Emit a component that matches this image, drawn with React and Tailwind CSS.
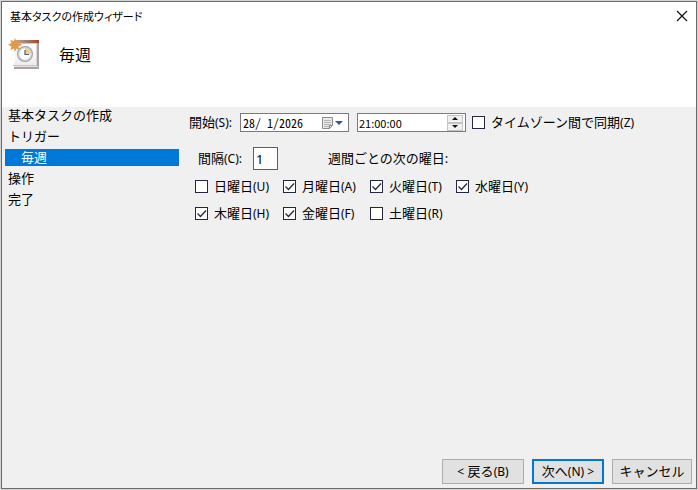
import { useState } from "react";

const steps = [
  { name: "基本タスクの作成" },
  { name: "トリガー" },
  { name: "毎週", child: true },
  { name: "操作" },
  { name: "完了" },
];

const initialDays = [
  { name: "日曜日", hotkey: "(U)", checked: false },
  { name: "月曜日", hotkey: "(A)", checked: true },
  { name: "火曜日", hotkey: "(T)", checked: true },
  { name: "水曜日", hotkey: "(Y)", checked: true },
  { name: "木曜日", hotkey: "(H)", checked: true },
  { name: "金曜日", hotkey: "(F)", checked: true },
  { name: "土曜日", hotkey: "(R)", checked: false },
];

const TaskIcon = () => (
  <svg width="33" height="33" viewBox="0 0 33 33" aria-hidden="true">
    <defs>
      <linearGradient id="band" x1="0" x2="1">
        <stop offset="0" stopColor="#b9aaa6" />
        <stop offset="1" stopColor="#9c4a24" />
      </linearGradient>
      <linearGradient id="page" x1="0" x2="0" y2="1">
        <stop offset="0" stopColor="#ffffff" />
        <stop offset="1" stopColor="#efecec" />
      </linearGradient>
    </defs>
    <path d="M6 28h22V3h3v28H6z" fill="#aaa3a3" />
    <path d="M28 6h1v22h-1z" fill="#dcd8d8" />
    <path d="M7 5h21v22H5l2-4z" fill="url(#page)" />
    <path d="M5 27h24v1H5z" fill="#c9c4c4" />
    <path d="M6 28h24v1H6z" fill="#e4e1e1" />
    <path d="M7 2h24v3H7z" fill="url(#band)" />
    <path d="M7 5h22v1H7z" fill="#dcc6bc" />
    <circle cx="17" cy="16" r="8" fill="#9b9fa2" />
    <circle cx="17" cy="16" r="7" fill="#cfd3d5" />
    <circle cx="17" cy="16" r="5.700" fill="#fafaf8" />
    <path d="M17 16v-5.700a5.700 5.700 0 0 1 5.700 5.700z" fill="#f2cd88" />
    <path d="M17 12v4.500h4" fill="none" stroke="#56606a" strokeWidth="1.200" />
    <path
      d="M7 0l1.300 3.300L11.500 1.500 10.500 5l4 1.800-4 1.800 1.300 3.400-3.500-1.500L7 14l-1.300-3.500L2.300 12l1.200-3.400L0 6.800 3.500 5 2.300 1.800l3.400 1.500z"
      fill="#e29a48"
    />
  </svg>
);

const CheckBox = ({ name, hotkey, checked, onChange }) => (
  <label className="flex items-center gap-1.5 whitespace-nowrap">
    <span className="relative flex">
      <input
        type="checkbox"
        checked={checked}
        onChange={onChange}
        className="peer size-[13px] appearance-none border border-[#26263e] bg-white"
      />
      <svg
        viewBox="0 0 13 13"
        className="pointer-events-none absolute inset-0 hidden size-[13px] peer-checked:block"
      >
        <path d="M2.500 6.500l3 3 5.500-6" fill="none" stroke="#26263e" strokeWidth="1.300" />
      </svg>
    </span>
    <span>
      {name}
      <span className="text-xs">{hotkey}</span>
    </span>
  </label>
);

const App = () => {
  const [date, setDate] = useState("28/ 1/2026");
  const [time, setTime] = useState("21:00:00");
  const [interval, setInterval] = useState("1");
  const [sync, setSync] = useState(false);
  const [days, setDays] = useState(initialDays);

  const toggleDay = (name) =>
    setDays(days.map((d) => (d.name === name ? { ...d, checked: !d.checked } : d)));

  return (
    <div className="flex min-h-screen bg-[#d4d4d4] p-px font-['Noto_Sans','Noto_Sans_CJK_JP',sans-serif] text-[13px] leading-[19px] text-black">
      <div className="flex flex-1 flex-col border border-[#6b6b6b] bg-[#f0f0f0]">
        <header className="h-[105px] bg-white">
          <div className="flex items-center justify-between pt-1 pr-1 pl-2">
            <h1 className="text-[11px] [font-feature-settings:'palt']">基本タスクの作成ウィザード</h1>
            <button type="button" aria-label="閉じる" className="p-1">
              <svg width="12" height="12" viewBox="0 0 12 12">
                <path d="M1 1l10 10M11 1L1 11" stroke="#111" strokeWidth="1.200" />
              </svg>
            </button>
          </div>
          <div className="flex items-center gap-[18px] pt-3 pl-1.5">
            <TaskIcon />
            <h2 className="text-base leading-5">毎週</h2>
          </div>
        </header>

        <div className="flex flex-1">
          <nav className="w-[177px] pl-[3px]">
            <ul>
              {steps.map((s) => (
                <li key={s.name} className="flex h-[21px] items-start">
                  <span
                    className={
                      s.child
                        ? "w-full bg-[#0078d7] pl-4 leading-[17px] text-white"
                        : "w-full pl-[3px] leading-[17px]"
                    }
                  >
                    {s.name}
                  </span>
                </li>
              ))}
            </ul>
          </nav>

          <main className="flex-1 pt-1.5 pl-2.5">
            <div className="flex h-[19px] items-center">
              <label htmlFor="start" className="w-[51px]">
                開始<span className="text-xs">(S):</span>
              </label>
              <div className="flex h-[19px] w-[109px] items-center border border-[#7a7a7a] bg-white">
                <input
                  id="start"
                  value={date}
                  onChange={(e) => setDate(e.target.value)}
                  className="w-0 flex-1 pl-0.5 font-['Noto_Sans_CJK_JP',sans-serif] text-xs leading-4 outline-none [font-feature-settings:'hwid']"
                />
                <button type="button" aria-label="カレンダー" className="pr-1">
                  <svg width="23" height="14" viewBox="0 0 23 14">
                    <path d="M1.500 1.500h10v8l-3 3h-7z" fill="#e9e9e9" stroke="#8b8b8b" />
                    <path
                      d="M3 4.500h7M3 6.500h7M3 8.500h7M3 10.500h5"
                      stroke="#b4b4b4"
                      strokeWidth="1"
                    />
                    <path d="M8.500 12.500v-3h3z" fill="#fff" stroke="#8b8b8b" />
                    <path d="M14 5h8l-4 4z" fill="#2f5c92" />
                  </svg>
                </button>
              </div>
              <div className="ml-2 flex h-[19px] w-[109px] items-center border border-[#7a7a7a] bg-white">
                <input
                  aria-label="開始時刻"
                  value={time}
                  onChange={(e) => setTime(e.target.value)}
                  className="w-0 flex-1 pl-px font-['Noto_Sans_CJK_JP',sans-serif] text-[11px] leading-4 outline-none"
                />
                <div className="flex flex-col pr-0.5">
                  <button
                    type="button"
                    aria-label="進める"
                    className="flex h-2 w-4 items-center justify-center border border-[#c4c4c4] bg-[#f0f0f0]"
                  >
                    <svg width="6" height="3" viewBox="0 0 6 3">
                      <path d="M0 3l3-3 3 3z" fill="#111" />
                    </svg>
                  </button>
                  <button
                    type="button"
                    aria-label="戻す"
                    className="flex h-2 w-4 items-center justify-center border border-[#c4c4c4] bg-[#f0f0f0]"
                  >
                    <svg width="6" height="3" viewBox="0 0 6 3">
                      <path d="M0 0h6L3 3z" fill="#111" />
                    </svg>
                  </button>
                </div>
              </div>
              <div className="ml-1.5">
                <CheckBox
                  name="タイムゾーン間で同期"
                  hotkey="(Z)"
                  checked={sync}
                  onChange={() => setSync(!sync)}
                />
              </div>
            </div>

            <div className="flex items-center pt-[15px] pl-[9px]">
              <label htmlFor="interval" className="w-[55px]">
                間隔<span className="text-xs">(C):</span>
              </label>
              <input
                id="interval"
                value={interval}
                onChange={(e) => setInterval(e.target.value)}
                className="h-[23px] w-[25px] border border-[#0078d7] bg-white pl-0.5 outline-none"
              />
              <span className="pl-[50px]">週間ごとの次の曜日:</span>
            </div>

            <div className="grid grid-cols-[88px_87px_86px_auto] gap-y-2 pt-[7px] pl-1.5">
              {days.map((d) => (
                <CheckBox key={d.name} {...d} onChange={() => toggleDay(d.name)} />
              ))}
            </div>
          </main>
        </div>

        <footer className="flex justify-end gap-2 pr-1 pb-1">
          <button type="button" className="h-[25px] w-[82px] border border-[#adadad] bg-[#e1e1e1]">
            <span className="text-xs">&lt;</span> 戻る<span className="text-xs">(B)</span>
          </button>
          <button type="button" className="h-[25px] w-[72px] border-2 border-[#0078d7] bg-[#e1e1e1]">
            次へ<span className="text-xs">(N) &gt;</span>
          </button>
          <button type="button" className="h-[25px] w-20 border border-[#adadad] bg-[#e1e1e1]">
            キャンセル
          </button>
        </footer>
      </div>
    </div>
  );
};

export default App;
